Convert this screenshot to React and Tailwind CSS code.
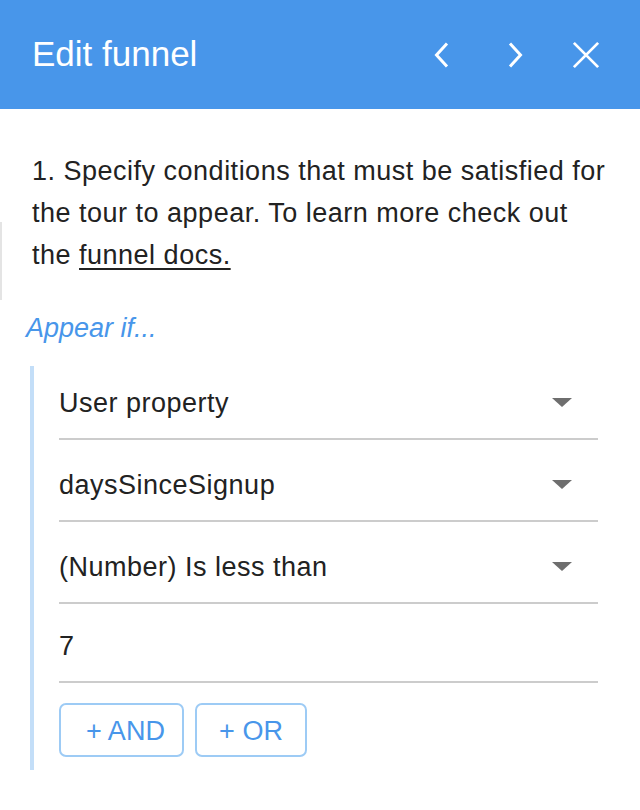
import { useState } from "react";

const rows = [
  { label: "User property", select: true, h: "h-[74px]" },
  { label: "daysSinceSignup", select: true, h: "h-[82px]" },
  { label: "(Number) Is less than", select: true, h: "h-[82px]" },
  { label: "7", select: false, h: "h-[79px]" },
];

function Caret() {
  return (
    <svg width="20" height="10" viewBox="0 0 20 10" className="shrink-0">
      <path d="M0 0 L20 0 L10 9 Z" fill="#6e6e6e" />
    </svg>
  );
}

export default function App() {
  const [step] = useState(1);

  return (
    <div
      className="relative w-[640px] h-[810px] bg-white overflow-hidden"
      style={{ fontFamily: '"Liberation Sans", Arial, sans-serif' }}
    >
      {/* Header */}
      <div className="h-[109px] bg-[#4896ea] flex items-center pl-[32px] pr-[40px] text-white">
        <h1 className="flex-1 text-[35px] leading-none pb-[2px]">Edit funnel</h1>
        <div className="flex items-center">
          <button className="w-[16px] h-[28px] flex items-center justify-center mr-[58px]">
            <svg width="15" height="26" viewBox="0 0 15 26">
              <path d="M13 1.5 L2.5 13 L13 24.5" fill="none" stroke="white" strokeWidth="3" />
            </svg>
          </button>
          <button className="w-[16px] h-[28px] flex items-center justify-center mr-[49px]">
            <svg width="15" height="26" viewBox="0 0 15 26">
              <path d="M2 1.5 L12.5 13 L2 24.5" fill="none" stroke="white" strokeWidth="3" />
            </svg>
          </button>
          <button className="w-[28px] h-[28px] flex items-center justify-center">
            <svg width="30" height="30" viewBox="0 0 30 30">
              <path d="M2 2 L28 28 M28 2 L2 28" fill="none" stroke="white" strokeWidth="3" />
            </svg>
          </button>
        </div>
      </div>

      {/* faint edge of the page behind */}
      <div className="absolute left-0 top-[222px] w-[2px] h-[78px] bg-[#e4e4e4]" />

      {/* Body */}
      <div className="pt-[41px] text-[#222]">
        <p className="px-[32px] text-[27px] leading-[42px] tracking-[0.5px]">
          {step}. Specify conditions that must be satisfied for the tour to appear. To learn more check
          out the <a href="#" className="underline underline-offset-[4px]">funnel docs.</a>
        </p>

        <div className="mt-[31px] pl-[26px] text-[27px] leading-[42px] italic text-[#4896ea]">
          Appear if...
        </div>

        <div className="mt-[17px] ml-[30px] mr-[42px] border-l-4 border-[#c3def8] pl-[25px] pb-[13px]">
          {rows.map((r) => (
            <div
              key={r.label}
              className={`${r.h} flex items-end border-b-2 border-[#cccccc] pb-[20px]`}
            >
              <div className="flex-1 flex items-center justify-between">
                <span className="text-[27px] leading-[30px] tracking-[0.5px]">{r.label}</span>
                {r.select && (
                  <span className="mr-[26px]">
                    <Caret />
                  </span>
                )}
              </div>
            </div>
          ))}

          <div className="flex gap-[11px] mt-[20px]">
            <button className="w-[125px] h-[54px] rounded-[7px] border-2 border-[#9dcbf5] text-[#4896ea] text-[27px] pl-[8px] pt-[2px] flex items-center justify-center">
              + AND
            </button>
            <button className="w-[112px] h-[54px] rounded-[7px] border-2 border-[#9dcbf5] text-[#4896ea] text-[27px] pt-[2px] flex items-center justify-center">
              + OR
            </button>
          </div>
        </div>
      </div>
    </div>
  );
}
